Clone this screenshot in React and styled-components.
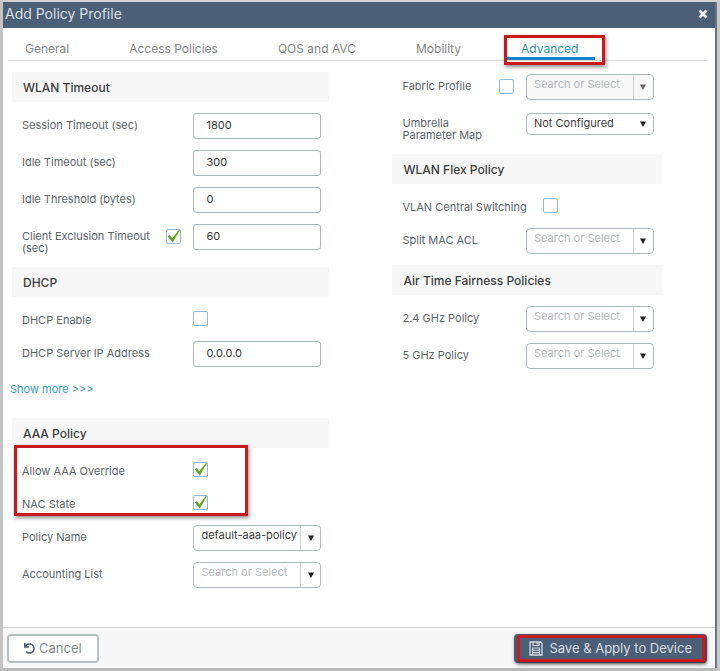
import React, { useState } from 'react';
import styled, { createGlobalStyle } from 'styled-components';
import { FaUndo } from 'react-icons/fa';

const GlobalStyle = createGlobalStyle`
  * {
    box-sizing: border-box;
  }
  body {
    margin: 0;
    background: #fff;
  }
  body, button, input, select {
    font-family: Inter, 'Liberation Sans', sans-serif;
    font-size: 11px;
  }
`;

const Dialog = styled.div`
  min-height: 100vh;
  display: flex;
  flex-direction: column;
  background: #fff;
  border-style: solid;
  border-width: 2px 3px 3px 3px;
  border-color: #d2d2d2 #c9c9c9 #b9b9b9 #c4c4c4;
`;

const Inner = styled.div`
  flex: 1;
  display: flex;
  flex-direction: column;
  border-right: 2px solid #6d7680;
`;

const TitleBar = styled.header`
  height: 26px;
  padding: 0 7px 3px 2px;
  display: flex;
  align-items: center;
  justify-content: space-between;
  background: #4b6077;
`;

const Title = styled.h1`
  margin: 0;
  font-size: 14px;
  font-weight: 400;
  color: #d9dfe3;
`;

const CloseButton = styled.button`
  display: flex;
  padding: 0;
  border: 0;
  background: none;
  color: #eef2f4;
`;

const Tabs = styled.nav`
  display: flex;
  gap: 26px;
  height: 33px;
  margin: 0 8px 0 5px;
  border-bottom: 1px solid #d6d9da;
`;

const Tab = styled.button`
  position: relative;
  padding: 11px 17px 0;
  border: 0;
  border-bottom: 3px solid ${props => (props.$active ? '#1583c9' : 'transparent')};
  background: none;
  font-size: 12px;
  color: ${props => (props.$active ? '#2b93a8' : '#858585')};
`;

const Highlight = styled.span`
  position: absolute;
  inset: ${props => props.$inset};
  border: 3px solid #c8191c;
  box-shadow: 1px 2px 4px rgba(0, 0, 0, 0.45);
  pointer-events: none;
`;

const Body = styled.form`
  flex: 1;
  display: grid;
  grid-template-columns: 318fr 270fr;
  align-items: start;
  column-gap: 63px;
  padding: 7px 53px 30px 9px;
`;

const Column = styled.div`
  padding-top: ${props => (props.$inset ? '4px' : '0')};
`;

const Section = styled.section`
  margin-top: ${props => (props.$tight ? '6px' : '12px')};

  &:first-child {
    margin-top: 0;
  }
`;

const SectionTitle = styled.h2`
  height: 30px;
  margin: 0 0 5px;
  padding: 0 11px;
  display: flex;
  align-items: center;
  background: #f7f7f7;
  font-size: 12px;
  font-weight: 500;
  color: #3c3c3c;
`;

const Row = styled.div`
  min-height: ${props => (props.$short ? '33px' : '37px')};
  padding: 0 8px 0 10px;
  display: flex;
  align-items: center;
`;

const Label = styled.label`
  flex: ${props => (props.$hug ? 'none' : '1')};
  align-self: flex-start;
  padding: 12px ${props => props.$gap || '22px'} 0 0;
  line-height: 12px;
  color: #5b6366;
`;

const Control = styled.div`
  flex: none;
  width: 128px;
  display: flex;
`;

const TextInput = styled.input`
  width: 100%;
  height: 26px;
  padding: 0 12px 1px;
  border: 1px solid #adb8bd;
  border-radius: 3px;
  background: #fff;
  color: #333;
`;

const SelectBox = styled.div`
  width: 100%;
  display: grid;
  grid-template-columns: 1fr 20px;
  border: 1px solid #adb9bf;
  border-radius: 4px;
  background: ${props => (props.$disabled ? '#f8f8f8' : '#fff')};
`;

const NativeSelect = styled.select`
  grid-area: 1 / 1 / 2 / 3;
  appearance: none;
  height: ${props => (props.$plain ? '20px' : '24px')};
  padding: 0 20px ${props => (props.$plain ? '1px' : '5px')} 7px;
  border: 0;
  background: none;
  color: ${props => (props.$empty ? '#b5b9bb' : '#3c3c3c')};
  opacity: 1;
`;

const Arrow = styled.span`
  grid-area: 1 / 2;
  display: flex;
  align-items: center;
  justify-content: center;
  border-left: ${props => (props.$plain ? '0' : '1px')} solid #ccd4d8;
  color: ${props => (props.$disabled ? '#666' : '#222')};
  pointer-events: none;
`;

const CheckBox = styled.span`
  flex: none;
  display: grid;
  width: 15px;
  height: 15px;
  margin-right: ${props => (props.$lead ? '12px' : '0')};

  input, svg {
    grid-area: 1 / 1;
  }

  input {
    appearance: none;
    width: 15px;
    height: 15px;
    margin: 0;
    border: 1px solid #8fb9dc;
    border-radius: 2px;
    background: #fff;
  }

  svg {
    pointer-events: none;
  }
`;

const MoreLine = styled.div`
  height: 34px;
  display: flex;
  align-items: center;

  a {
    margin-left: -2px;
    color: #35a0aa;
    text-decoration: none;
  }
`;

const HighlightGroup = styled.div`
  position: relative;
`;

const Footer = styled.footer`
  display: flex;
  justify-content: space-between;
  align-items: center;
  height: 41px;
  padding: 0 8px 0 4px;
  border-top: 1px solid #d4d4d4;
  background: #f7f7f7;
`;

const FooterButton = styled.button`
  height: 29px;
  display: flex;
  align-items: center;
  justify-content: center;
  gap: 4px;
  padding: 0 15px;
  border: 2px solid #b9c0c3;
  border-radius: 4px;
  background: #fff;
  font-size: 13px;
  color: #858b8e;

  svg {
    color: #4a5a66;
  }
`;

const SaveButton = styled(FooterButton)`
  position: relative;
  gap: 6px;
  padding: 0 13px;
  border-color: #4b6077;
  background: #4b6077;
  color: #d5dde2;
  box-shadow: 0 1px 3px rgba(0, 0, 0, 0.35);

  svg {
    color: #d5dde2;
  }
`;

const CloseIcon = () => (
  <svg width="10" height="10" viewBox="0 0 10 10" aria-hidden="true">
    <path d="M1.5 1.5l7 7M8.5 1.5l-7 7" stroke="currentColor" strokeWidth="2.6" />
  </svg>
);

const SaveIcon = () => (
  <svg width="14" height="15" viewBox="0 0 14 15" fill="none" stroke="currentColor" aria-hidden="true">
    <path d="M1 1h10.5L13 2.5V14H1z" strokeWidth="1.3" />
    <path d="M4 1v3.5h6V1M8.2 1.5v2" strokeWidth="1.2" />
    <path d="M3.5 14V7h7v7M3.5 9.3h7M3.5 11.6h7" strokeWidth="1.1" />
  </svg>
);

const Check = ({ id, defaultChecked = false, lead, label }) => {
  const [checked, setChecked] = useState(defaultChecked);
  return (
    <CheckBox $lead={lead}>
      <input
        type="checkbox"
        id={id}
        aria-label={label}
        checked={checked}
        onChange={event => setChecked(event.target.checked)}
      />
      {checked && (
        <svg width="15" height="15" viewBox="0 0 15 15" aria-hidden="true">
          <path d="M1.5 7.2l2.4-1.2 2.4 3.2L12.8 1l1 .5L6.8 13.4z" fill="#5fa81f" />
        </svg>
      )}
    </CheckBox>
  );
};

const Dropdown = ({ id, value, disabled, plain }) => (
  <SelectBox $disabled={disabled}>
    <NativeSelect id={id} disabled={disabled} $empty={!value} $plain={plain}>
      <option>{value || 'Search or Select'}</option>
    </NativeSelect>
    <Arrow $plain={plain} $disabled={disabled}>
      <svg width="6" height="6" viewBox="0 0 6 6" aria-hidden="true">
        <path d="M0 0.5h6L3 6z" fill="currentColor" />
      </svg>
    </Arrow>
  </SelectBox>
);

const Field = ({ id, label, lead, short, children }) => (
  <Row $short={short}>
    <Label htmlFor={id} $gap={lead && '8px'}>{label}</Label>
    {lead}
    <Control>{children}</Control>
  </Row>
);

const TextField = ({ id, label, value, lead }) => (
  <Field id={id} label={label} lead={lead}>
    <TextInput id={id} type="text" defaultValue={value} />
  </Field>
);

const SelectField = ({ id, label, lead, ...rest }) => (
  <Field id={id} label={label} lead={lead}>
    <Dropdown id={id} {...rest} />
  </Field>
);

const CheckField = ({ id, label, defaultChecked }) => (
  <Field id={id} label={label} short>
    <Check id={id} defaultChecked={defaultChecked} />
  </Field>
);

const tabs = ['General', 'Access Policies', 'QOS and AVC', 'Mobility', 'Advanced'];

const App = () => {
  const [active, setActive] = useState('Advanced');

  return (
    <Dialog>
      <GlobalStyle />
      <Inner>
        <TitleBar>
          <Title>Add Policy Profile</Title>
          <CloseButton type="button" aria-label="Close">
            <CloseIcon />
          </CloseButton>
        </TitleBar>
        <Tabs>
          {tabs.map(tab => (
            <Tab key={tab} type="button" $active={tab === active} onClick={() => setActive(tab)}>
              {tab}
              {tab === 'Advanced' && <Highlight $inset="7px -10px -8px 0" />}
            </Tab>
          ))}
        </Tabs>
        <Body id="policy" onSubmit={event => event.preventDefault()}>
          <Column $inset>
            <Section>
              <SectionTitle>WLAN Timeout</SectionTitle>
              <TextField id="session" label="Session Timeout (sec)" value="1800" />
              <TextField id="idle" label="Idle Timeout (sec)" value="300" />
              <TextField id="threshold" label="Idle Threshold (bytes)" value="0" />
              <TextField
                id="exclusion"
                label="Client Exclusion Timeout (sec)"
                value="60"
                lead={<Check lead defaultChecked label="Enable client exclusion" />}
              />
            </Section>
            <Section>
              <SectionTitle>DHCP</SectionTitle>
              <CheckField id="dhcp" label="DHCP Enable" />
              <TextField id="dhcpServer" label="DHCP Server IP Address" value="0.0.0.0" />
              <MoreLine>
                <a href="#more">Show more &gt;&gt;&gt;</a>
              </MoreLine>
            </Section>
            <Section>
              <SectionTitle>AAA Policy</SectionTitle>
              <HighlightGroup>
                <CheckField id="override" label="Allow AAA Override" defaultChecked />
                <CheckField id="nac" label="NAC State" defaultChecked />
                <Highlight $inset="-8px 81px 3px 2px" />
              </HighlightGroup>
              <SelectField id="policyName" label="Policy Name" value="default-aaa-policy" />
              <SelectField id="accounting" label="Accounting List" />
            </Section>
          </Column>
          <Column>
            <Section>
              <SelectField
                id="fabric"
                label="Fabric Profile"
                disabled
                lead={<Check lead label="Enable fabric profile" />}
              />
              <SelectField id="umbrella" label="Umbrella Parameter Map" value="Not Configured" plain />
            </Section>
            <Section>
              <SectionTitle>WLAN Flex Policy</SectionTitle>
              <Row $short>
                <Label htmlFor="vlan" $hug $gap="16px">VLAN Central Switching</Label>
                <Check id="vlan" />
              </Row>
              <SelectField id="acl" label="Split MAC ACL" />
            </Section>
            <Section $tight>
              <SectionTitle>Air Time Fairness Policies</SectionTitle>
              <SelectField id="ghz24" label="2.4 GHz Policy" />
              <SelectField id="ghz5" label="5 GHz Policy" />
            </Section>
          </Column>
        </Body>
        <Footer>
          <FooterButton type="button">
            <FaUndo size={11} />
            Cancel
          </FooterButton>
          <SaveButton type="submit" form="policy">
            <SaveIcon />
            Save &amp; Apply to Device
            <Highlight $inset="-1px 0 -1px 1px" />
          </SaveButton>
        </Footer>
      </Inner>
    </Dialog>
  );
};

export default App;
